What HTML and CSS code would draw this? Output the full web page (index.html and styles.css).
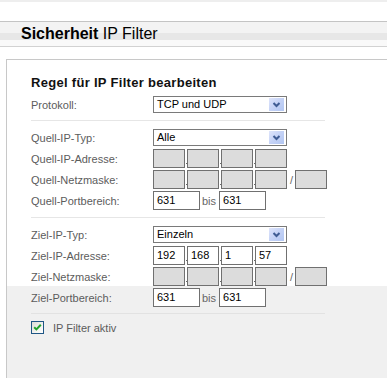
FILE: index.html
```html
<!DOCTYPE html>
<html lang="de">
<head>
<meta charset="utf-8">
<title>Sicherheit IP Filter</title>
<link rel="stylesheet" href="styles.css">
</head>
<body>
<div class="topstrip"></div>
<div class="header"><span class="title"><b>Sicherheit</b> IP Filter</span></div>
<div class="panel">
  <div class="upper">
    <h1 class="heading">Regel für IP Filter bearbeiten</h1>
    <div class="row srow">
      <span class="label">Protokoll:</span>
      <div class="select"><span>TCP und UDP</span><span class="btn"><svg width="15" height="13" viewBox="0 0 15 13"><path d="M4.5 5 L7.5 8 L10.5 5" fill="none" stroke="#3f5c93" stroke-width="2"/></svg></span></div>
    </div>
    <div class="sep"></div>
    <div class="row srow">
      <span class="label">Quell-IP-Typ:</span>
      <div class="select"><span>Alle</span><span class="btn"><svg width="15" height="13" viewBox="0 0 15 13"><path d="M4.5 5 L7.5 8 L10.5 5" fill="none" stroke="#3f5c93" stroke-width="2"/></svg></span></div>
    </div>
    <div class="row brow">
      <span class="label">Quell-IP-Adresse:</span>
      <span class="box ip"></span><span class="dot"></span><span class="box ip"></span><span class="dot"></span><span class="box ip"></span><span class="dot"></span><span class="box ip"></span>
    </div>
    <div class="row brow">
      <span class="label">Quell-Netzmaske:</span>
      <span class="box ip"></span><span class="dot"></span><span class="box ip"></span><span class="dot"></span><span class="box ip"></span><span class="dot"></span><span class="box ip"></span><span class="slash">/</span><span class="box ip"></span>
    </div>
    <div class="row brow">
      <span class="label">Quell-Portbereich:</span>
      <span class="box port on">631</span><span class="bis">bis</span><span class="box port on">631</span>
    </div>
    <div class="sep"></div>
    <div class="row srow">
      <span class="label">Ziel-IP-Typ:</span>
      <div class="select"><span>Einzeln</span><span class="btn"><svg width="15" height="13" viewBox="0 0 15 13"><path d="M4.5 5 L7.5 8 L10.5 5" fill="none" stroke="#3f5c93" stroke-width="2"/></svg></span></div>
    </div>
    <div class="row brow">
      <span class="label">Ziel-IP-Adresse:</span>
      <span class="box ip on">192</span><span class="dot"></span><span class="box ip on">168</span><span class="dot"></span><span class="box ip on">1</span><span class="dot"></span><span class="box ip on">57</span>
    </div>
    <div class="row brow">
      <span class="label">Ziel-Netzmaske:</span>
      <span class="box ip"></span><span class="dot"></span><span class="box ip"></span><span class="dot"></span><span class="box ip"></span><span class="dot"></span><span class="box ip"></span><span class="slash">/</span><span class="box ip"></span>
    </div>
  </div>
  <div class="lower">
    <div class="row brow">
      <span class="label">Ziel-Portbereich:</span>
      <span class="box port on">631</span><span class="bis">bis</span><span class="box port on">631</span>
    </div>
    <div class="sep sep-low"></div>
    <div class="row crow">
      <span class="cb"><svg width="11" height="11" viewBox="0 0 11 11"><path d="M2.2 5.2 L4.4 7.4 L8.8 2.8" fill="none" stroke="#21a32a" stroke-width="2"/></svg></span>
      <span class="cblabel">IP Filter aktiv</span>
    </div>
  </div>
</div>
</body>
</html>
```
FILE: styles.css
```css
html, body {
  margin: 0;
  padding: 0;
  background: #ffffff;
  overflow: hidden;
}
body {
  font-family: "Liberation Sans", Arial, sans-serif;
  color: #000;
}
.topstrip {
  height: 2px;
  background: #eeeeee;
}
.header {
  margin-top: 19px;
  height: 24px;
  border-top: 1px solid #c4c4c4;
  border-bottom: 1px solid #d2d2d2;
  background: linear-gradient(#f3f3f3 0, #f3f3f3 46%, #e7e7e7 46%, #e7e7e7 76%, #f9f9f9 76%, #f9f9f9 100%);
  padding-left: 21px;
  font-size: 16px;
  line-height: 24px;
}
.title b {
  font-weight: bold;
}
.panel {
  margin-top: 12px;
  margin-left: 6px;
  border-top: 1px solid #c8c8c8;
  border-left: 1px solid #c8c8c8;
}
.upper {
  padding: 15px 0 0 24px;
  background: #fff;
}
.heading {
  margin: 0 0 6px 0;
  font-size: 13px;
  line-height: 15px;
  font-weight: bold;
  letter-spacing: 0.3px;
  color: #111;
}
.row {
  display: flex;
  align-items: center;
}
.srow {
  height: 17px;
}
.brow {
  height: 19px;
  margin-top: 2px;
}
.srow + .brow {
  margin-top: 3px;
}
.label {
  width: 122px;
  flex: none;
  font-size: 11px;
  color: #5c5c5c;
}
.select {
  width: 134px;
  height: 17px;
  box-sizing: border-box;
  border: 1px solid #7a7a7a;
  background: #fff;
  display: flex;
  align-items: center;
  justify-content: space-between;
  padding-left: 3px;
  font-size: 11px;
  line-height: 15px;
}
.btn {
  width: 15px;
  height: 13px;
  margin-right: 2px;
  background: linear-gradient(135deg, #dfe5fb 0%, #c4d2f6 50%, #b2c6f2 100%);
  display: flex;
}
.box {
  height: 19px;
  box-sizing: border-box;
  border: 1px solid #707070;
  background: #dcdcdc;
  font-size: 11px;
  line-height: 17px;
  padding-left: 3px;
  flex: none;
}
.box.on {
  background: #fff;
}
.ip {
  width: 32px;
}
.port {
  width: 47px;
}
.dot {
  width: 2px;
  height: 19px;
  display: flex;
  align-items: flex-end;
  justify-content: center;
  padding-bottom: 4px;
  box-sizing: border-box;
}
.dot::before {
  content: "";
  width: 1px;
  height: 1px;
  background: #6a6a6a;
}
.slash {
  margin: 0 2px 0 3px;
  font-size: 11px;
  color: #666;
  width: 3px;
}
.bis {
  margin: 0 3px 0 2px;
  font-size: 11px;
  color: #666;
}
.sep {
  width: 294px;
  height: 1px;
  background: #e6e6e6;
  margin: 7px 0 8px 0;
}
.lower {
  background: #f0f0f0;
  padding: 2px 0 0 24px;
  height: 90px;
}
.lower .brow {
  margin-top: 0;
}
.sep-low {
  background: #e2e2e2;
  margin: 6px 0 7px 0;
}
.crow {
  height: 13px;
}
.cb {
  width: 13px;
  height: 13px;
  box-sizing: border-box;
  border: 1px solid #1f5685;
  background: linear-gradient(135deg, #dcdcd4 0%, #f6f6f4 70%, #ffffff 100%);
  display: flex;
  align-items: center;
  justify-content: center;
  flex: none;
}
.cblabel {
  margin-left: 9px;
  font-size: 11px;
  color: #5c5c5c;
}
```
